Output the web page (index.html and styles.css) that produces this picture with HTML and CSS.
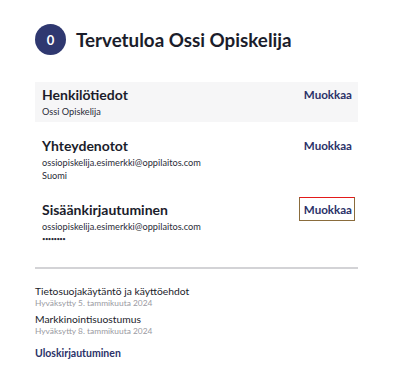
FILE: index.html
```html
<!DOCTYPE html>
<html lang="fi">
<head>
<meta charset="utf-8">
<link rel="stylesheet" href="styles.css">
</head>
<body>
<main class="page">
  <header class="header">
    <div class="avatar">0</div>
    <h1 class="title">Tervetuloa Ossi Opiskelija</h1>
  </header>

  <section class="card card-grey">
    <div class="card-main">
      <h2 class="card-title">Henkilötiedot</h2>
      <p class="line">Ossi Opiskelija</p>
    </div>
    <a class="edit" href="#">Muokkaa</a>
  </section>

  <section class="card">
    <div class="card-main">
      <h2 class="card-title">Yhteydenotot</h2>
      <p class="line">ossiopiskelija.esimerkki@oppilaitos.com</p>
      <p class="line">Suomi</p>
    </div>
    <a class="edit" href="#">Muokkaa</a>
  </section>

  <section class="card">
    <div class="card-main">
      <h2 class="card-title">Sisäänkirjautuminen</h2>
      <p class="line">ossiopiskelija.esimerkki@oppilaitos.com</p>
      <p class="line dots">••••••••</p>
    </div>
    <a class="edit edit-focus" href="#">Muokkaa</a>
  </section>

  <hr class="divider">

  <ul class="consents">
    <li class="consent">
      <span class="consent-name">Tietosuojakäytäntö ja käyttöehdot</span>
      <span class="consent-date">Hyväksytty 5. tammikuuta 2024</span>
    </li>
    <li class="consent">
      <span class="consent-name">Markkinointisuostumus</span>
      <span class="consent-date">Hyväksytty 8. tammikuuta 2024</span>
    </li>
  </ul>

  <a class="logout" href="#">Uloskirjautuminen</a>
</main>
</body>
</html>
```

FILE: styles.css
```css
* { box-sizing: border-box; }
html, body { margin: 0; padding: 0; background: #fff; }
body {
  font-family: Lato, "Liberation Sans", sans-serif;
  color: #1b1d2b;
}
.page {
  width: 323px;
  margin-left: 35px;
  padding-top: 23px;
  display: flex;
  flex-direction: column;
}
.header {
  display: flex;
  align-items: center;
  gap: 10px;
  height: 33px;
  margin-bottom: 26px;
}
.avatar {
  width: 31px;
  height: 31px;
  border-radius: 50%;
  background: #2f3870;
  color: #fff;
  font-weight: 700;
  font-size: 13px;
  display: flex;
  align-items: center;
  justify-content: center;
}
.title {
  margin: 0;
  font-size: 18.8px;
  font-weight: 700;
}
.card {
  position: relative;
  display: flex;
  justify-content: space-between;
  align-items: flex-start;
  padding: 4px 6px 4px 7px;
  margin-bottom: 11px;
}
.card-grey { background: #f6f6f7; }
.card-main { display: flex; flex-direction: column; }
.card-title {
  margin: 0 0 2px;
  font-size: 14px;
  font-weight: 700;
  line-height: 17px;
}
.line {
  margin: 0;
  font-size: 9.2px;
  line-height: 13px;
  color: #2a2c38;
}
.dots { font-size: 6px; line-height: 11px; letter-spacing: -0.6px; }
.edit {
  color: #2b3268;
  font-weight: 700;
  font-size: 11.6px;
  line-height: 17px;
  text-decoration: none;
}
.edit-focus { position: relative; }
.edit-focus::before {
  content: "";
  position: absolute;
  left: -12px;
  right: -16px;
  top: -3px;
  bottom: -5px;
  background: #fdf2f8;
  z-index: -1;
}
.edit-focus::after {
  content: "";
  position: absolute;
  left: -5px;
  right: -3px;
  top: -4px;
  bottom: -3px;
  border: 1.5px solid #8a6c3c;
  border-top-color: #e31a1a;
}
.divider {
  margin: 8px 0 0;
  border: 0;
  border-top: 2px solid #d3d3d6;
}
.consents {
  list-style: none;
  margin: 16px 0 0;
  padding: 0;
  display: flex;
  flex-direction: column;
  gap: 4px;
}
.consent { display: flex; flex-direction: column; align-items: flex-start; }
.consent-name { font-size: 10.3px; line-height: 13px; color: #1b1d2b; }
.consent-date { font-size: 8.4px; line-height: 11px; color: #9a9aa2; }
.logout {
  margin-top: 9px;
  align-self: flex-start;
  color: #2b3268;
  font-weight: 700;
  font-size: 10.5px;
  line-height: 14px;
  text-decoration: none;
}
```
